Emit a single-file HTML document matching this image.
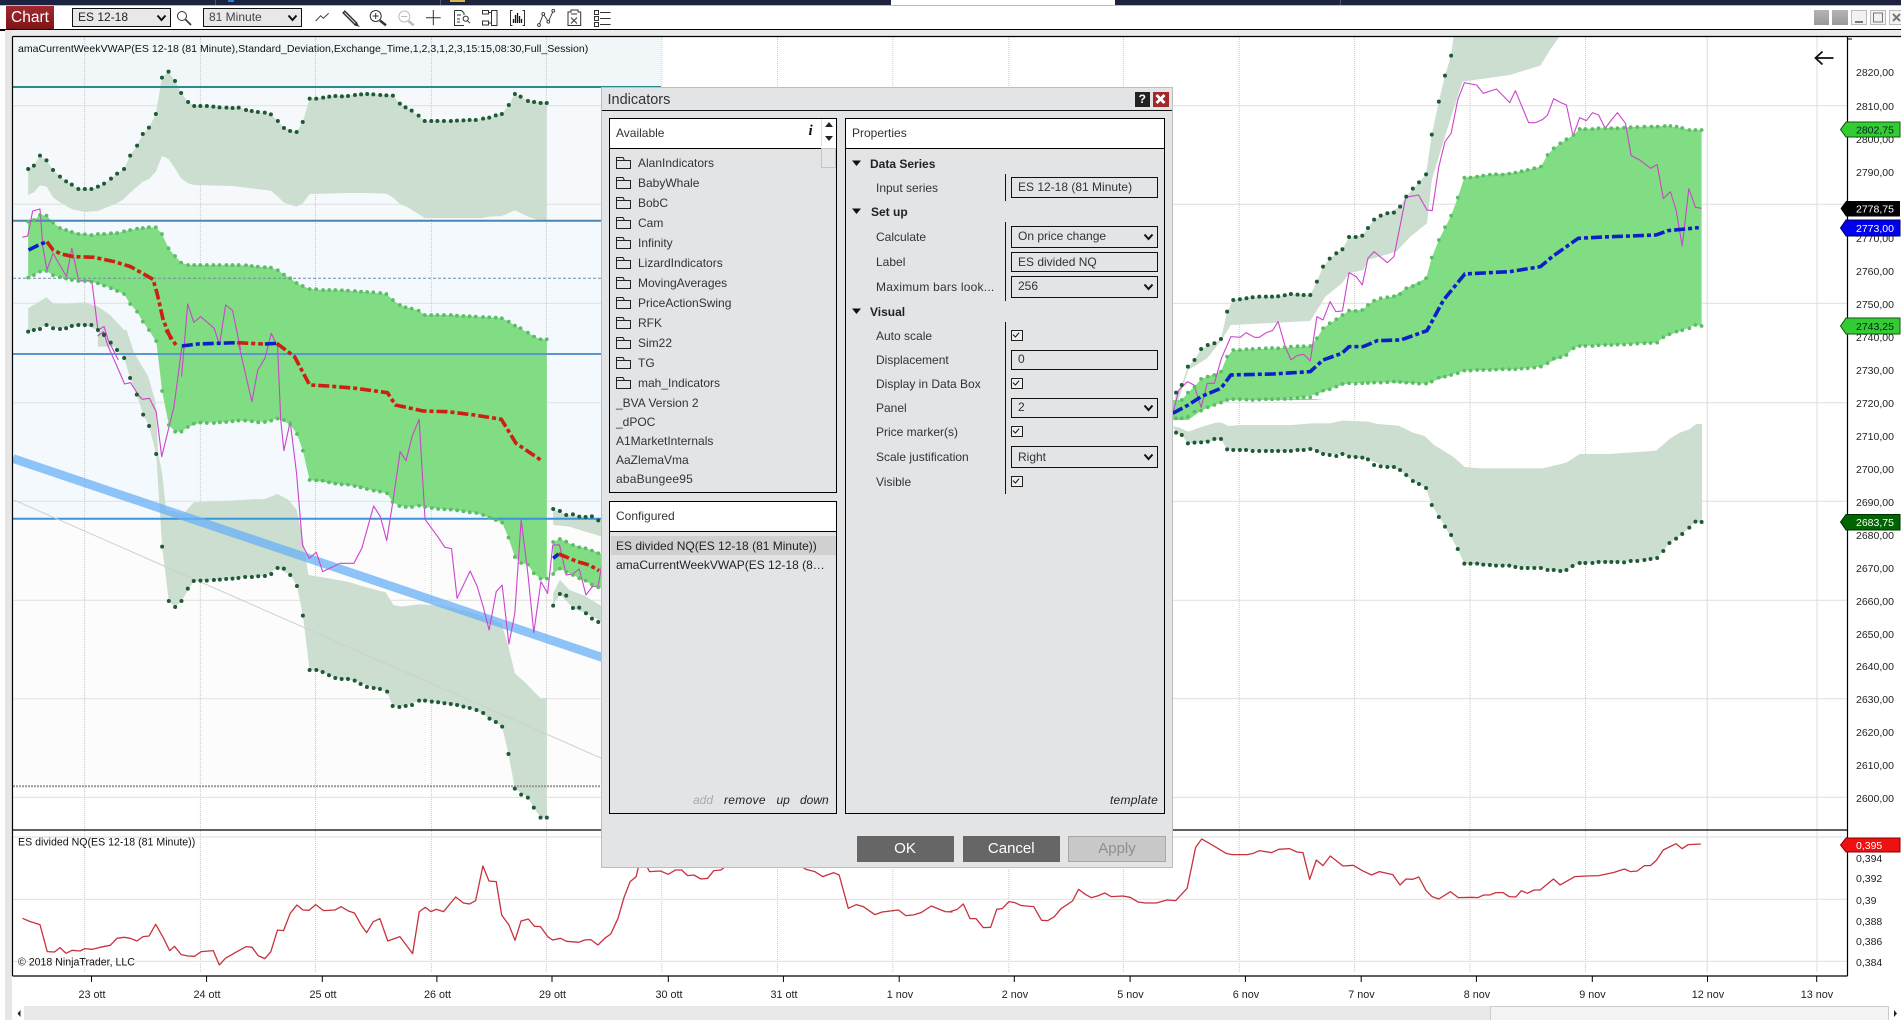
<!DOCTYPE html>
<html><head><meta charset="utf-8"><title>Chart</title>
<style>
html,body{margin:0;padding:0;background:#fff;width:1901px;height:1020px;overflow:hidden}
body{font-family:"Liberation Sans",Arial,sans-serif;position:relative;color:#222}
.a{position:absolute;box-sizing:border-box}
.t{position:absolute;white-space:nowrap;line-height:14px;height:14px;font-size:12px;color:#333;margin-top:-7px}
.b{font-weight:bold;color:#222}
.i{font-style:italic;color:#222}
.box{position:absolute;box-sizing:border-box;left:1011px;width:147px;border:1.5px solid #111;background:#e3e4e6;font-size:12px;color:#333;padding-left:6px}
.box svg{position:absolute;right:3px;top:50%;margin-top:-4px}
.ck{position:absolute;box-sizing:border-box;left:1011px;width:12px;height:11px;border:1.5px solid #222;background:#eee}
.ck:after{content:"";position:absolute;left:2px;top:0;width:3px;height:5px;border:solid #111;border-width:0 1.6px 1.6px 0;transform:rotate(40deg)}
.pan{position:absolute;box-sizing:border-box;border:1.5px solid #000;background:#e3e4e6}
.hd{position:absolute;left:0;right:0;top:0;background:#fff;border-bottom:1.5px solid #000}
.btn{position:absolute;box-sizing:border-box;top:836px;height:26px;text-align:center;font-size:15px;line-height:26px;background:#666;color:#fff}
svg text{font-family:"Liberation Sans",Arial,sans-serif}
.d{fill:none;stroke-linecap:round;vector-effect:non-scaling-stroke}
.l{fill:none;stroke-linejoin:round;vector-effect:non-scaling-stroke}
</style></head><body>

<!-- top bar -->
<div class="a" style="left:0;top:0;width:1901px;height:5px;background:#1b2340"></div>
<div class="a" style="left:891px;top:0;width:224px;height:5px;background:#fff"></div>
<div class="a" style="left:215px;top:0;width:1px;height:5px;background:#556"></div>
<div class="a" style="left:440px;top:0;width:1px;height:5px;background:#556"></div>
<div class="a" style="left:1340px;top:0;width:1px;height:5px;background:#556"></div>
<div class="a" style="left:228px;top:0;width:6px;height:2px;background:#2a7fd0"></div>
<div class="a" style="left:450px;top:0;width:15px;height:2px;background:#d8b840"></div>
<div class="a" style="left:0;top:5px;width:1901px;height:1px;background:#bbb"></div>

<!-- chrome -->
<div class="a" style="left:0;top:29px;width:1901px;height:1.5px;background:#000"></div>
<div class="a" style="left:5px;top:30px;width:1896px;height:7px;background:#ececec"></div>
<div class="a" style="left:5px;top:30px;width:7px;height:990px;background:#e6e6e6"></div>

<!-- toolbar -->
<div class="a" style="left:6px;top:6px;width:48px;height:23px;background:linear-gradient(#a02a30,#7d1518);color:#fff;font-size:15.500px;line-height:23px;text-align:center">Chart</div>
<div class="a" style="left:72px;top:8px;width:99px;height:19px;border:1.5px solid #111;background:#e8e8e8;font-size:12px;line-height:16px;padding-left:5px;color:#222">ES 12-18<svg style="position:absolute;right:3px;top:5px" width="11" height="8"><path d="M1.5 1.5L5.5 6L9.5 1.5" fill="none" stroke="#111" stroke-width="2"/></svg></div>
<div class="a" style="left:203px;top:8px;width:99px;height:19px;border:1.5px solid #111;background:#e8e8e8;font-size:12px;line-height:16px;padding-left:5px;color:#444">81 Minute<svg style="position:absolute;right:3px;top:5px" width="11" height="8"><path d="M1.5 1.5L5.5 6L9.5 1.5" fill="none" stroke="#111" stroke-width="2"/></svg></div>
<svg class="a" style="left:0;top:0" width="700" height="30" fill="none" stroke="#333" stroke-width="1">
 <circle cx="182" cy="16" r="4.500"/><path d="M185.500 19.500L191 25" stroke-width="1.600"/>
 <path d="M315.700 21L320.700 15.700L323.300 18.300L328.700 13.300" stroke="#444"/>
 <path d="M343.500 11.500L356.500 24.500" stroke="#333" stroke-width="3.800"/><path d="M344.500 12.500L356 24" stroke="#ddd" stroke-width="1"/><path d="M356 23L358.500 26L355 25Z" fill="#111"/>
 <circle cx="375.700" cy="16" r="5.500"/><path d="M372.700 16h6M375.700 13v6"/><path d="M380 20.500L386 25.300" stroke-width="2.500"/>
 <g stroke="#bcbcbc"><circle cx="404.300" cy="16.500" r="5.500"/><path d="M401.300 16.500h6"/><path d="M408.500 21L413.700 25.300" stroke-width="2.500"/></g>
 <path d="M426 17.700h14.700M433.300 10v15.300"/>
 <path d="M454.500 10.500h7l2.500 2.500v2M454.500 10.500v15h9.500M457 19h3M457 22h3M457 15h4"/><circle cx="465.700" cy="18.700" r="2.600"/><path d="M467.500 20.700l2.500 2.500"/>
 <path d="M482.500 10.500h6v3.500h-6zM482.500 21h6v4h-6zM488.500 12.500h3M488.500 23h3M491.500 10.500h5.500v15h-5.500z"/>
 <path d="M512.500 10.500h-2v15h2M522.500 10.500h2v15h-2"/><path d="M513.500 23v-4M515.500 23v-8M517.500 23v-10M519.500 23v-7M521.500 23v-4" stroke="#111" stroke-width="1.300"/>
 <path d="M539 25.300L543.300 14L548.300 21.700L553.300 10.700" stroke-width=".9"/><g fill="#fff" stroke-width=".9"><circle cx="539" cy="25" r="1.400"/><circle cx="543.300" cy="14" r="1.400"/><circle cx="548.300" cy="21.700" r="1.400"/><circle cx="553.300" cy="10.700" r="1.400"/></g>
 <path d="M568 12h3v-2h7v2h2.700v13.500h-12.700z"/><path d="M571 17.500l6 6M577 17.500l-6 6M571 14h6"/>
 <path d="M594.500 10.500h4v4h-4zM594.500 16.500h4v4h-4zM594.500 22.500h4v4h-4zM600 12.500h10.500M600 18.500h10.500M600 24.500h10.500"/>
</svg>
<!-- window buttons -->
<div class="a" style="left:1814px;top:10px;width:15px;height:15px;background:linear-gradient(#b5b5b5,#999)"></div>
<div class="a" style="left:1832px;top:10px;width:16px;height:15px;background:linear-gradient(#b5b5b5,#999)"></div>
<svg class="a" style="left:1851px;top:10px" width="50" height="16" fill="none" stroke="#777"><rect x=".5" y=".5" width="15" height="14" fill="#f2f2f2" stroke="#bbb"/><path d="M4 12h8" stroke-width="2"/><rect x="19.500" y=".5" width="15" height="14" fill="#f2f2f2" stroke="#bbb"/><rect x="22.500" y="3" width="9" height="9"/><rect x="38.500" y=".5" width="13" height="14" fill="#f2f2f2" stroke="#bbb"/><path d="M42 4l7 7M49 4l-7 7" stroke-width="2"/></svg>

<!-- CHART -->
<svg class="a" style="left:0;top:0" width="1901" height="1020">
<defs><clipPath id="m"><rect x="13" y="37" width="1834" height="793"/></clipPath></defs>
<g clip-path="url(#m)">
 <!-- zones -->
 <rect x="13" y="37" width="648" height="50" fill="#f1f7f8"/>
 <rect x="13" y="87" width="648" height="133" fill="#f5f9fb"/>
 <rect x="13" y="220" width="648" height="134" fill="#f4f9fe"/>
 <rect x="13" y="354" width="648" height="165" fill="#f4f9fe"/>
 <rect x="13" y="519" width="648" height="267" fill="#fcfcfc"/>
 <!-- grid -->
 <path d="M13 105.700H1847M13 204.300H1847M13 303.300H1847M13 402.700H1847M13 501.300H1847M13 600.300H1847M13 698.700H1847M13 797.300H1847" stroke="#e2e2e2" stroke-width="1.200" fill="none"/>
</g>
<path d="M84.600 37V972M200.400 37V972M315.500 37V972M431.400 37V972M546.400 37V972M661.700 37V972M777.500 37V972M892.800 37V972M1008.800 37V972M1123.400 37V972M1239.300 37V972M1354.600 37V972M1470 37V972M1585.500 37V972" stroke="#c8c8c8" stroke-dasharray="1 1" fill="none"/>
<path d="M1707.200 37V972M1817 37V972" stroke="#dcdcdc" fill="none"/>
<path d="M13 837H1847M13 899.300H1847M13 961.300H1847" stroke="#e2e2e2" stroke-width="1.200" fill="none"/>

<g clip-path="url(#m)">
<!-- bands week 1 -->
<g transform="scale(.408 .3333)">
 <path fill="#cbdecf" d="M69 507L83 497L98 467L114 481L130 510L147 530L162 544L176 554L192 567L224 567L240 560L255 551L272 536L287 521L304 507L319 467L336 437L350 402L365 383L382 342L397 233L413 215L429 243L444 279L461 306L476 318L523 320L555 323L585 323L617 333L664 343L681 363L696 384L727 396L742 366L759 296L792 293L822 288L870 285L900 282L963 287L980 311L1009 332L1041 363L1120 362L1166 360L1199 353L1230 342L1247 315L1262 282L1294 303L1340 309L1340 660L1320 660L1294 650L1262 631L1230 648L1199 650L1180 654L1041 654L1000 622L980 612L963 592L947 581L900 579L850 579L759 582L742 610L727 620L696 608L681 590L664 572L620 566L570 558L476 555L461 550L444 535L429 505L413 477L397 468L382 515L365 537L350 545L336 560L319 578L304 597L287 610L272 617L240 633L208 636L176 628L147 607L130 592L114 560L98 556L83 577L69 585Z"/>
 <path fill="#cbdecf" d="M69 995L69 925L114 892L130 910L160 912L208 907L240 920L270 945L300 985L320 1040L240 1040L240 990L208 975L176 978L147 987L114 975L83 990Z"/>
 <path fill="#80dd83" d="M69 665L83 660L98 645L114 647L130 668L147 684L176 696L208 703L224 705L255 702L287 699L319 690L350 684L382 682L397 702L413 745L429 768L444 788L461 795L603 796L632 800L664 803L681 811L696 824L711 835L727 849L742 858L759 867L792 870L838 871L885 875L947 882L963 900L980 915L994 922L1026 932L1041 945L1105 945L1151 949L1199 952L1230 955L1247 965L1262 977L1294 998L1309 1010L1325 1018L1340 1018L1340 1024L382 1024L365 990L350 965L336 935L319 912L304 882L272 865L240 850L208 843L162 836L130 826L114 813L98 815L83 825L69 833Z"/>
</g>
<g transform="translate(0 330) scale(.3954 .3333)">
 <path fill="#80dd83" d="M395 30L1383 30L1383 746L1367 746L1350 730L1335 704L1318 699L1302 681L1286 623L1270 578L1238 563L1205 549L1156 541L1092 534L1060 527L1042 531L1010 528L993 516L979 490L945 482L897 468L848 461L783 450L766 362L751 312L734 283L702 266L670 276L637 274L603 272L556 277L507 278L475 291L459 305L443 305L427 285L410 183Z"/>
 <path fill="#cbdecf" d="M263 15L270 0L320 0L340 70L375 140L393 215L400 370L410 430L420 540L465 550L490 517L640 508L670 507L702 492L730 510L750 540L765 620L780 735L830 745L885 757L920 770L975 787L995 825L1015 830L1060 823L1120 827L1200 850L1268 880L1285 945L1302 1030L1330 1060L1367 1105L1383 1105L1383 1463L1367 1463L1350 1433L1335 1403L1302 1376L1286 1272L1270 1190L1238 1166L1205 1140L1156 1125L1108 1117L1060 1112L1026 1128L993 1128L979 1085L945 1074L897 1052L864 1047L832 1036L800 1020L783 1020L766 857L751 768L734 735L702 714L670 738L620 741L556 749L490 753L459 813L443 831L427 813L410 650L395 372L377 288L362 254L346 194L329 144L314 84L296 60L280 38Z"/>
 <path fill="#cbdecf" d="M1399 537L1432 555L1481 561L1530 573L1530 622L1480 605L1440 590L1399 585Z"/>
 <path fill="#80dd83" d="M1399 636L1416 627L1449 645L1481 655L1530 675L1530 778L1497 764L1449 735L1416 716L1399 732Z"/>
 <path fill="#cbdecf" d="M1399 827L1399 790L1416 750L1440 780L1480 798L1530 835L1530 880L1482 850L1449 834L1416 792Z"/>
</g>
<!-- bands right -->
<g transform="translate(1160 0) scale(.4726 .3333)">
 <path fill="#cbdecf" d="M27 1240L34 1178L46 1155L59 1100L73 1080L87 1047L115 1030L129 1017L142 935L155 900L196 892L250 889L277 882L318 885L332 845L345 800L359 776L386 748L400 711L428 707L440 684L453 659L481 640L508 620L521 590L548 547L563 523L575 404L590 305L603 227L616 167L622 100L850 100L825 150L805 197L740 225L640 245L605 400L590 470L575 540L565 670L530 710L500 755L440 780L430 810L400 820L385 850L350 890L318 963L150 975L130 1020L100 1075L60 1110L30 1240Z"/>
 <path fill="#80dd83" d="M27 1235L46 1200L59 1178L73 1160L87 1137L129 1115L142 1070L155 1050L250 1045L318 1038L332 1015L345 985L373 958L400 932L428 930L440 915L453 902L495 889L521 865L563 835L575 773L590 720L616 647L630 593L644 533L698 524L752 518L806 500L820 465L833 445L860 418L875 405L888 387L1068 378L1105 384L1120 390L1146 390L1146 978L1133 975L1105 991L1065 1012L1052 1028L968 1034L888 1038L875 1045L860 1065L820 1090L806 1100L752 1108L644 1112L616 1125L575 1145L563 1151L481 1147L400 1150L373 1160L332 1182L304 1192L224 1198L155 1198L129 1208L87 1232L60 1260L27 1260Z"/>
</g>
<g transform="translate(1160 400) scale(.4726 .3333)">
 <path fill="#80dd83" d="M27 0L350 0L300 -5L155 -2L129 0L87 25L60 55L27 55Z"/>
 <path fill="#cbdecf" d="M27 78L40 82L60 95L85 82L118 68L130 68L145 78L170 75L280 75L320 70L360 70L385 62L440 65L460 72L505 77L535 98L560 108L580 135L620 170L645 201L680 205L810 205L860 188L888 162L950 162L1050 152L1080 115L1100 98L1120 88L1135 72L1147 72L1147 366L1133 365L1105 402L1078 429L1052 474L996 483L888 489L860 510L847 513L806 504L725 497L644 491L630 447L603 380L575 315L563 264L535 243L508 210L481 201L440 178L400 170L386 162L345 162L318 147L264 153L182 150L142 148L129 117L101 125L59 130L46 105L34 98Z"/>
</g>

<!-- lines -->
<path d="M13 87H661" stroke="#2b8c90" stroke-width="2" fill="none"/>
<path d="M13 220.700H661" stroke="#4a86b4" stroke-width="2" fill="none"/>
<path d="M13 278.300H661" stroke="#6f8ea3" stroke-dasharray="3 2" fill="none"/>
<path d="M13 354H661" stroke="#5b96cc" stroke-width="2" fill="none"/>
<path d="M13 518.700H661" stroke="#3a94dc" stroke-width="2" fill="none"/>
<path d="M13 786.300H661" stroke="#999" stroke-width="2" stroke-dasharray="2 1" fill="none"/>
<path d="M14 500L660 784" stroke="#cfcfcf" fill="none"/>
<path d="M13 458.500L660 677" stroke="#6ab0f5" stroke-opacity=".75" stroke-width="8.800" fill="none"/>

<!-- pink price-like line -->
<g stroke="#cc44cc" stroke-width="1.100">
 <g transform="scale(.408 .3333)">
  <path class="l" d="M55 712L68 708L80 633L98 627L105 740L115 810L130 760L163 830L176 745L193 843L225 843L240 990L255 980L265 1020L290 1080"/>
  <path class="l" d="M445 1130L460 912L475 967L492 950L525 985L538 1035L553 915L570 932L590 1050"/>
 </g>
 <g transform="translate(0 330) scale(.3954 .3333)">
  <path class="l" d="M247 18L262 5L272 45L285 80L300 120L315 162L330 158L350 195L360 208L378 205L395 245L409 380L440 230L460 50"/>
  <path class="l" d="M603 40L637 215L652 120L670 85L686 10L702 50L710 270L718 362L734 275L750 430L765 645L782 685L800 667L816 725L860 700L895 700L915 655L945 528L962 560L978 632L993 520L1012 365L1027 392L1042 320L1060 268L1075 568L1110 625L1125 652L1142 656L1156 805L1189 723L1207 770L1222 830L1237 900L1255 785L1270 765L1287 942L1302 850L1318 570L1335 730L1350 908L1368 755L1385 790L1398 645L1415 645L1432 735L1449 732L1465 717L1482 795L1498 770L1513 768L1525 680"/>
 </g>
 <g transform="translate(1160 0) scale(.4726 .3333)">
  <path class="l" d="M27 1240L40 1170L58 1145L72 1155L87 1222L100 1150L115 1150L130 1075L150 1010L170 1012L182 998L200 1012L210 1012L225 998L238 992L250 965L265 1040L277 1080L291 1066L304 1063L318 1083L332 950L345 960L360 905L372 935L386 933L400 818L415 830L428 855L440 775L453 755L481 788L495 770L520 592L547 585L565 630L576 632L590 500L603 425L616 400L630 300L644 248L670 255L684 280L712 267L740 308L752 272L780 368L795 368L810 358L820 345L833 296L848 308L860 315L874 408L888 353L902 362L915 338L928 345L942 385L955 360L968 338L985 370L997 467L1015 480L1038 505L1052 494L1065 596L1080 575L1092 630L1105 738L1119 566L1133 622L1146 625"/>
 </g>
</g>

<!-- mean dash-dot -->
<g stroke-width="3.600" stroke-dasharray="11 3 4 3">
 <g transform="scale(.408 .3333)">
  <path class="l" stroke="#0d1fc8" d="M70 750L95 735L115 725"/>
  <path class="l" stroke="#cc2012" d="M115 725L130 750L150 762L180 770L230 772L280 785L320 800L375 838L385 880L400 960L420 1020"/>
 </g>
 <g transform="translate(0 330) scale(.3954 .3333)">
  <path class="l" stroke="#cc2012" d="M420 0L445 45"/>
  <path class="l" stroke="#0d1fc8" d="M460 48L500 42L600 38"/>
  <path class="l" stroke="#cc2012" d="M600 38L665 42"/>
  <path class="l" stroke="#0d1fc8" d="M670 42L700 40"/>
  <path class="l" stroke="#cc2012" d="M700 40L745 80L783 165L830 168L900 175L980 188L1000 225L1070 243L1130 245L1200 255L1268 268L1305 340L1370 392"/>
  <path class="l" stroke="#0d1fc8" d="M1399 685L1413 672"/>
  <path class="l" stroke="#cc2012" d="M1413 672L1430 680L1460 695L1490 705L1515 722"/>
 </g>
 <g transform="translate(1160 0) scale(.4726 .3333)">
  <path class="l" stroke="#0d1fc8" d="M27 1240L60 1215L87 1190L129 1165L150 1125L240 1122L318 1115L345 1080L385 1060L400 1040L430 1040L460 1022L510 1020L565 992L600 900L645 822L740 815L805 800L830 770L885 715L940 711L1050 705L1075 692L1140 683"/>
 </g>
</g>

<!-- dots -->
<g transform="scale(.408 .3333)">
 <path class="d" stroke="#1f5a36" stroke-width="4" d="M69 507h0M83 497h0M98 467h0M114 481h0M130 510h0M147 530h0M162 544h0M176 554h0M192 567h0M208 567h0M224 567h0M240 560h0M255 551h0M272 536h0M287 521h0M304 507h0M319 467h0M336 437h0M350 402h0M365 383h0M382 342h0M397 233h0M413 215h0M429 243h0M444 279h0M461 306h0M476 318h0M491 318h0M507 318h0M523 320h0M538 322h0M555 323h0M570 324h0M585 323h0M603 330h0M617 333h0M632 336h0M649 338h0M664 343h0M681 363h0M696 384h0M711 393h0M727 396h0M742 366h0M759 296h0M775 296h0M792 293h0M807 290h0M822 288h0M838 289h0M853 288h0M870 285h0M885 283h0M900 282h0M915 283h0M932 285h0M947 286h0M963 287h0M980 311h0M994 322h0M1009 332h0M1026 347h0M1041 363h0M1057 363h0M1072 363h0M1088 363h0M1105 363h0M1120 362h0M1136 361h0M1151 360h0M1166 360h0M1184 356h0M1199 353h0M1215 346h0M1230 342h0M1247 315h0M1262 282h0M1276 290h0M1294 303h0M1309 306h0M1325 309h0M1340 309h0M69 995h0M83 990h0M98 987h0M114 975h0M130 985h0M147 987h0M162 985h0M176 978h0M192 975h0M208 975h0M224 975h0M240 990h0M255 1004h0"/>
 <path class="d" stroke="#5cbc68" stroke-width="3.800" d="M69 665h0M83 660h0M98 645h0M114 647h0M130 668h0M147 684h0M162 690h0M176 696h0M192 702h0M208 703h0M224 705h0M240 702h0M255 702h0M272 700h0M287 699h0M304 694h0M319 690h0M336 686h0M350 684h0M365 682h0M382 682h0M397 702h0M413 745h0M429 768h0M444 788h0M461 795h0M476 795h0M491 795h0M507 795h0M523 795h0M538 795h0M555 795h0M570 795h0M585 795h0M603 796h0M617 798h0M632 800h0M649 802h0M664 803h0M681 811h0M696 824h0M711 835h0M727 849h0M742 858h0M759 867h0M775 868h0M792 870h0M807 870h0M822 870h0M838 871h0M853 872h0M870 873h0M885 875h0M900 876h0M915 877h0M932 879h0M947 882h0M963 900h0M980 915h0M994 922h0M1009 926h0M1026 932h0M1041 945h0M1057 945h0M1072 945h0M1088 945h0M1105 945h0M1120 947h0M1136 948h0M1151 949h0M1166 950h0M1184 951h0M1199 952h0M1215 953h0M1230 955h0M1247 965h0M1262 977h0M1276 985h0M1294 998h0M1309 1010h0M1325 1018h0M1340 1018h0M69 833h0M83 825h0M98 815h0M114 813h0M130 826h0M147 832h0M162 836h0M176 840h0M192 843h0M208 843h0M224 845h0M240 850h0M255 857h0M272 865h0M287 873h0M304 882h0M319 912h0M336 935h0M350 965h0M365 990h0"/>
</g>
<g transform="translate(0 330) scale(.3954 .3333)">
 <path class="d" stroke="#5cbc68" stroke-width="3.800" d="M395 33h0M410 183h0M427 285h0M443 305h0M459 305h0M475 291h0M490 281h0M507 278h0M523 279h0M541 279h0M556 277h0M572 276h0M588 274h0M603 272h0M620 272h0M637 274h0M653 277h0M670 276h0M686 272h0M702 266h0M718 270h0M734 283h0M751 312h0M766 362h0M783 450h0M800 451h0M816 452h0M832 457h0M848 461h0M864 463h0M880 464h0M897 468h0M912 472h0M928 477h0M945 482h0M961 485h0M979 490h0M993 516h0M1010 528h0M1026 531h0M1042 531h0M1060 527h0M1075 531h0M1092 534h0M1108 537h0M1124 538h0M1140 539h0M1156 541h0M1172 544h0M1188 547h0M1205 549h0M1222 555h0M1238 563h0M1254 570h0M1270 578h0M1286 623h0M1302 681h0M1318 699h0M1335 704h0M1350 730h0M1367 746h0M1383 746h0M1399 636h0M1416 627h0M1432 635h0M1449 645h0M1465 652h0M1481 655h0M1497 662h0M1513 670h0M1399 732h0M1416 716h0M1432 726h0M1449 735h0M1465 745h0M1481 752h0M1497 764h0M1513 772h0"/>
 <path class="d" stroke="#1f5a36" stroke-width="4" d="M263 15h0M280 38h0M296 60h0M314 84h0M329 144h0M346 194h0M362 254h0M377 288h0M395 372h0M410 650h0M427 813h0M443 831h0M459 813h0M475 776h0M490 753h0M507 752h0M523 752h0M541 750h0M556 749h0M572 747h0M588 746h0M603 744h0M620 741h0M637 741h0M653 739h0M670 738h0M686 732h0M702 714h0M718 716h0M734 735h0M751 768h0M766 857h0M783 1020h0M800 1020h0M816 1026h0M832 1036h0M848 1044h0M864 1047h0M880 1047h0M897 1052h0M912 1062h0M928 1071h0M945 1074h0M961 1077h0M979 1085h0M993 1128h0M1010 1131h0M1026 1128h0M1042 1125h0M1060 1112h0M1075 1112h0M1092 1115h0M1108 1117h0M1124 1120h0M1140 1122h0M1156 1125h0M1172 1130h0M1188 1134h0M1205 1140h0M1222 1149h0M1238 1166h0M1254 1176h0M1270 1190h0M1286 1272h0M1302 1376h0M1318 1394h0M1335 1403h0M1350 1433h0M1367 1463h0M1383 1463h0M1399 537h0M1416 543h0M1432 555h0M1449 553h0M1465 560h0M1481 561h0M1497 559h0M1513 571h0M1399 827h0M1416 792h0M1432 797h0M1449 834h0M1465 833h0M1482 850h0M1497 866h0M1513 876h0"/>
</g>
<g transform="translate(1160 0) scale(.4726 .3333)">
 <path class="d" stroke="#1f5a36" stroke-width="4" d="M34 1178h0M46 1155h0M59 1100h0M73 1080h0M87 1047h0M101 1035h0M115 1030h0M129 1017h0M142 935h0M155 900h0M169 898h0M183 895h0M196 892h0M210 890h0M224 890h0M237 890h0M250 889h0M264 886h0M277 882h0M291 884h0M304 885h0M318 885h0M332 845h0M345 800h0M359 776h0M373 760h0M386 748h0M400 711h0M414 711h0M428 707h0M440 684h0M453 659h0M467 647h0M481 640h0M495 638h0M508 620h0M521 590h0M535 566h0M548 547h0M563 523h0M575 404h0M590 305h0M603 227h0M616 167h0"/>
 <path class="d" stroke="#5cbc68" stroke-width="3.800" d="M46 1200h0M59 1178h0M73 1160h0M87 1137h0M101 1130h0M115 1125h0M129 1115h0M142 1070h0M155 1050h0M169 1050h0M183 1048h0M196 1047h0M210 1046h0M224 1045h0M237 1044h0M250 1045h0M264 1042h0M277 1040h0M291 1039h0M304 1039h0M318 1038h0M332 1015h0M345 985h0M359 970h0M373 958h0M386 945h0M400 932h0M414 933h0M428 930h0M440 915h0M453 902h0M467 895h0M481 892h0M495 889h0M508 882h0M521 865h0M535 858h0M548 850h0M563 835h0M575 773h0M590 720h0M603 682h0M616 647h0M630 593h0M644 533h0M657 533h0M671 530h0M684 527h0M698 524h0M711 523h0M725 524h0M739 521h0M752 518h0M765 514h0M778 510h0M792 505h0M806 500h0M820 465h0M833 445h0M847 430h0M860 418h0M875 405h0M888 387h0M900 387h0M915 387h0M928 385h0M942 385h0M955 385h0M968 385h0M982 383h0M996 382h0M1010 381h0M1025 380h0M1040 380h0M1053 380h0M1068 378h0M1080 378h0M1093 380h0M1105 384h0M1120 390h0M1133 390h0M1146 390h0M87 1232h0M101 1222h0M115 1215h0M129 1208h0M142 1200h0M155 1198h0M169 1198h0M183 1199h0M196 1200h0M210 1199h0M224 1198h0M237 1198h0M250 1197h0M264 1197h0M277 1196h0M291 1194h0M304 1192h0M318 1192h0M332 1182h0M345 1172h0M359 1168h0M373 1160h0M386 1152h0M400 1150h0M414 1151h0M428 1150h0M440 1149h0M453 1148h0M467 1148h0M481 1147h0M495 1145h0M508 1146h0M521 1148h0M535 1149h0M548 1151h0M563 1151h0M575 1145h0M590 1133h0M603 1130h0M616 1125h0M630 1120h0M644 1112h0M657 1112h0M671 1110h0M684 1110h0M698 1110h0M711 1109h0M725 1108h0M739 1108h0M752 1108h0M765 1106h0M778 1105h0M792 1103h0M806 1100h0M820 1090h0M833 1076h0M847 1072h0M860 1065h0M875 1045h0M888 1038h0M900 1038h0M915 1038h0M928 1036h0M942 1035h0M955 1035h0M968 1034h0M982 1034h0M996 1033h0M1010 1031h0M1025 1030h0M1038 1029h0M1052 1028h0M1065 1012h0M1078 1003h0M1093 995h0M1105 991h0M1120 985h0M1133 975h0M1146 978h0"/>
</g>
<g transform="translate(1160 400) scale(.4726 .3333)">
 <path class="d" stroke="#5cbc68" stroke-width="3.800" d="M34 55h0M46 55h0M59 50h0M73 35h0"/>
 <path class="d" stroke="#1f5a36" stroke-width="4" d="M34 98h0M46 105h0M59 130h0M73 128h0M87 127h0M101 125h0M115 117h0M129 117h0M142 148h0M155 150h0M169 150h0M182 150h0M196 153h0M210 153h0M224 153h0M237 153h0M250 153h0M264 153h0M277 153h0M291 150h0M304 150h0M318 147h0M332 153h0M345 162h0M359 165h0M373 168h0M386 162h0M400 170h0M414 171h0M428 173h0M440 178h0M453 195h0M467 199h0M481 201h0M495 201h0M508 210h0M521 225h0M535 243h0M548 252h0M563 264h0M575 315h0M590 351h0M603 380h0M616 405h0M630 447h0M644 491h0M657 491h0M671 491h0M684 494h0M698 495h0M711 497h0M725 497h0M739 497h0M752 501h0M765 504h0M778 504h0M792 504h0M806 504h0M820 510h0M833 510h0M847 513h0M860 510h0M873 498h0M888 489h0M900 489h0M915 489h0M928 486h0M942 486h0M955 486h0M968 486h0M982 487h0M996 483h0M1010 483h0M1025 480h0M1038 477h0M1052 474h0M1065 453h0M1078 429h0M1092 416h0M1105 402h0M1120 383h0M1133 365h0M1146 366h0"/>
</g>
</g>

<!-- lower panel line -->
<g stroke="#c8323c" stroke-width="1.300">
 <g transform="translate(0 810) scale(.6059 .3333)">
  <path class="l" d="M37 325L50 335L66 344L78 425L90 426L99 413L109 430L119 421L132 423L140 416L152 418L165 412L182 406L193 385L205 382L215 385L226 393L236 380L246 378L257 343L270 385L280 422L288 409L299 434L310 438L321 439L332 425L352 422L362 465L372 445L388 428L406 410L416 412L426 437L437 446L447 425L458 360L468 362L479 310L490 285L500 300L510 301L521 284L534 302L553 300L563 290L575 303L585 309L596 345L605 368L616 335L627 326L640 393L660 380L681 431L692 305L702 292L711 305L720 298L732 305L752 261L765 279L775 282L785 272L797 168L807 213L819 215L828 315L840 345L850 391L860 333L872 327L882 349L892 350L904 380L912 390L925 385L935 394L955 397L965 390L975 389L987 405L998 385L1008 372L1020 325L1030 262L1040 215L1050 200L1058 135L1072 185L1090 183L1103 193L1115 180L1125 180L1135 197L1145 195L1157 207L1168 205L1178 182L1190 180L1210 150L1310 150L1330 178L1345 185L1358 200L1376 188L1385 195L1400 295L1413 284L1425 290L1444 314L1456 306L1483 300L1495 317L1507 315L1520 308L1537 288L1560 305L1572 306"/>
 </g>
 <g transform="translate(950 810) scale(.6065 .3333)">
  <path class="l" d="M0 305L12 298L22 282L33 326L43 326L55 353L67 352L77 298L86 296L97 275L107 278L118 287L138 290L151 331L161 332L172 320L183 296L202 273L212 238L223 253L233 263L243 258L255 249L266 260L285 258L297 262L310 276L322 279L340 279L358 270L372 272L391 235L405 112L415 87L435 108L455 130L465 134L490 134L500 130L510 122L530 128L542 118L560 116L572 126L582 128L593 208L604 150L615 167L627 138L648 168L665 166L680 182L695 195L708 185L730 194L742 225L752 207L763 208L773 201L785 242L795 260L806 267L825 245L838 263L860 262L870 263L880 255L890 255L900 248L912 248L922 260L933 261L942 242L952 250L963 240L973 240L995 207L1006 225L1030 200L1050 198L1070 197L1095 187L1112 177L1122 185L1133 183L1145 167L1155 167L1165 150L1176 120L1197 101L1207 116L1217 104L1238 102"/>
 </g>
</g>

<!-- axes -->
<path d="M12.500 36.500H1901" stroke="#000" stroke-width="1.200" fill="none"/>
<path d="M12.500 36.500V976" stroke="#000" stroke-width="1.200" fill="none"/>
<path d="M12.500 830H1847.500" stroke="#000" stroke-width="1.300" fill="none"/>
<path d="M12.500 976H1847.500" stroke="#000" stroke-width="1.300" fill="none"/>
<path d="M1847.500 37V976" stroke="#000" stroke-width="1.200" fill="none"/>
<path d="M1848 39h4" stroke="#000" fill="none"/>
<path d="M91.500 976v6M206.600 976v6M322.300 976v6M436.900 976v6M552 976v6M668.300 976v6M783.400 976v6M899.200 976v6M1014.300 976v6M1130.100 976v6M1245.400 976v6M1361.200 976v6M1476.400 976v6M1592.300 976v6M1707.500 976v6M1816.700 976v6" stroke="#000" fill="none"/>
<!-- back arrow -->
<path d="M1833.500 58H1815.500M1822.500 51.500L1815.500 58L1822.500 64.500" fill="none" stroke="#111" stroke-width="1.800"/>

<g font-size="10.500" fill="#222">
 <text x="1856" y="76">2820,00</text><text x="1856" y="110">2810,00</text><text x="1856" y="143">2800,00</text><text x="1856" y="176">2790,00</text><text x="1856" y="242">2770,00</text><text x="1856" y="275">2760,00</text><text x="1856" y="308">2750,00</text><text x="1856" y="341">2740,00</text><text x="1856" y="374">2730,00</text><text x="1856" y="407">2720,00</text><text x="1856" y="440">2710,00</text><text x="1856" y="473">2700,00</text><text x="1856" y="506">2690,00</text><text x="1856" y="539">2680,00</text><text x="1856" y="572">2670,00</text><text x="1856" y="605">2660,00</text><text x="1856" y="638">2650,00</text><text x="1856" y="670">2640,00</text><text x="1856" y="703">2630,00</text><text x="1856" y="736">2620,00</text><text x="1856" y="769">2610,00</text><text x="1856" y="802">2600,00</text>
 <text x="1856" y="862">0,394</text><text x="1856" y="882">0,392</text><text x="1856" y="904">0,39</text><text x="1856" y="925">0,388</text><text x="1856" y="945">0,386</text><text x="1856" y="966">0,384</text>
</g>
<g font-size="10.500">
 <path d="M1840.500 129.500L1846 122H1900V137H1846Z" fill="#33cc33" stroke="#115511"/><text x="1856" y="133.500" fill="#022">2802,75</text>
 <path d="M1840.500 208.500L1846 201H1900V216.500H1846Z" fill="#000"/><text x="1856" y="212.500" fill="#fff">2778,75</text>
 <path d="M1840.500 228L1846 220H1900V236H1846Z" fill="#0000ee" stroke="#000060"/><text x="1856" y="232" fill="#fff">2773,00</text>
 <path d="M1840.500 326L1846 318H1900V334H1846Z" fill="#33cc33" stroke="#115511"/><text x="1856" y="330" fill="#022">2743,25</text>
 <path d="M1840.500 522L1846 514.500H1900V530H1846Z" fill="#006400" stroke="#003000"/><text x="1856" y="526" fill="#fff">2683,75</text>
 <path d="M1840.500 845L1846 838H1900V852H1846Z" fill="#ee1111" stroke="#800"/><text x="1856" y="849" fill="#fff">0,395</text>
</g>
<g font-size="10.800" fill="#222" text-anchor="middle">
 <text x="92" y="998">23 ott</text><text x="207" y="998">24 ott</text><text x="323" y="998">25 ott</text><text x="437.500" y="998">26 ott</text><text x="552.500" y="998">29 ott</text><text x="669" y="998">30 ott</text><text x="784" y="998">31 ott</text><text x="900" y="998">1 nov</text><text x="1015" y="998">2 nov</text><text x="1130.500" y="998">5 nov</text><text x="1246" y="998">6 nov</text><text x="1361.500" y="998">7 nov</text><text x="1477" y="998">8 nov</text><text x="1592.500" y="998">9 nov</text><text x="1708" y="998">12 nov</text><text x="1817" y="998">13 nov</text>
</g>
<text x="18" y="52" font-size="10.570" fill="#111">amaCurrentWeekVWAP(ES 12-18 (81 Minute),Standard_Deviation,Exchange_Time,1,2,3,1,2,3,15:15,08:30,Full_Session)</text>
<text x="18" y="845.500" font-size="10.600" fill="#111">ES divided NQ(ES 12-18 (81 Minute))</text>
<text x="18" y="965.500" font-size="10.600" fill="#111">© 2018 NinjaTrader, LLC</text>
<!-- scrollbar -->
<rect x="12" y="1006" width="1889" height="14" fill="#e8e8e8"/>
<rect x="12" y="1006" width="12" height="14" fill="#fff"/>
<rect x="1889" y="1006" width="12" height="14" fill="#fff"/>
<rect x="1490.500" y="1006.500" width="398" height="14" fill="#f3f3f3" stroke="#ccc"/>
<path d="M20.500 1010v7l-3-3.500zM1894 1010v7l3-3.500z" fill="#222"/>
</svg>

<!-- DIALOG -->
<div class="a" style="left:601px;top:87px;width:572px;height:781px;background:#e3e4e6;border:1px solid #bdbdbd"></div>
<div class="a" style="left:602px;top:110px;width:570px;height:1.300px;background:#111"></div>
<div class="t" style="left:607.500px;top:99.500px;font-size:14.500px;line-height:16px;height:16px;margin-top:-8px;color:#333">Indicators</div>
<div class="a" style="left:1134.500px;top:92px;width:15.500px;height:14.500px;background:#222;color:#fff;font-size:12px;font-weight:bold;line-height:14.500px;text-align:center">?</div>
<div class="a" style="left:1153px;top:92px;width:15.500px;height:14.500px;background:#a02a2a"><svg width="15" height="14" style="display:block"><path d="M3.500 3L11.500 11M11.500 3L3.500 11" stroke="#fff" stroke-width="2.800"/></svg></div>

<!-- Available -->
<div class="pan" style="left:609px;top:118px;width:228px;height:375px"><div class="hd" style="height:28.500px"></div></div>
<div class="t" style="left:616px;top:132.700px">Available</div>
<div class="t" style="left:808.500px;top:130px;font:italic bold 15px 'Liberation Serif',serif;color:#111">i</div>
<div class="a" style="left:821px;top:119px;width:1px;height:27px;background:#ddd"></div>
<svg class="a" style="left:823px;top:121px" width="12" height="22"><path d="M2 6L6 1L10 6ZM2 15H10L6 20Z" fill="#222"/></svg>
<div class="a" style="left:821px;top:148px;width:15px;height:20px;background:#e6e6e6;border:1px solid #c4c4c4"></div>
<svg class="a" style="left:614px;top:150px" width="20" height="245" fill="none" stroke="#222">
 <path d="M2.500 18.500V7.500H9L10.500 10.500H16.500V18.500ZM2.500 10.500H10.500"/>
 <path transform="translate(0 20)" d="M2.500 18.500V7.500H9L10.500 10.500H16.500V18.500ZM2.500 10.500H10.500"/>
 <path transform="translate(0 40)" d="M2.500 18.500V7.500H9L10.500 10.500H16.500V18.500ZM2.500 10.500H10.500"/>
 <path transform="translate(0 60)" d="M2.500 18.500V7.500H9L10.500 10.500H16.500V18.500ZM2.500 10.500H10.500"/>
 <path transform="translate(0 80)" d="M2.500 18.500V7.500H9L10.500 10.500H16.500V18.500ZM2.500 10.500H10.500"/>
 <path transform="translate(0 100)" d="M2.500 18.500V7.500H9L10.500 10.500H16.500V18.500ZM2.500 10.500H10.500"/>
 <path transform="translate(0 120)" d="M2.500 18.500V7.500H9L10.500 10.500H16.500V18.500ZM2.500 10.500H10.500"/>
 <path transform="translate(0 140)" d="M2.500 18.500V7.500H9L10.500 10.500H16.500V18.500ZM2.500 10.500H10.500"/>
 <path transform="translate(0 160)" d="M2.500 18.500V7.500H9L10.500 10.500H16.500V18.500ZM2.500 10.500H10.500"/>
 <path transform="translate(0 180)" d="M2.500 18.500V7.500H9L10.500 10.500H16.500V18.500ZM2.500 10.500H10.500"/>
 <path transform="translate(0 200)" d="M2.500 18.500V7.500H9L10.500 10.500H16.500V18.500ZM2.500 10.500H10.500"/>
 <path transform="translate(0 220)" d="M2.500 18.500V7.500H9L10.500 10.500H16.500V18.500ZM2.500 10.500H10.500"/>
</svg>
<div class="t" style="left:638px;top:162.700px">AlanIndicators</div>
<div class="t" style="left:638px;top:182.700px">BabyWhale</div>
<div class="t" style="left:638px;top:202.700px">BobC</div>
<div class="t" style="left:638px;top:222.700px">Cam</div>
<div class="t" style="left:638px;top:242.700px">Infinity</div>
<div class="t" style="left:638px;top:262.700px">LizardIndicators</div>
<div class="t" style="left:638px;top:282.700px">MovingAverages</div>
<div class="t" style="left:638px;top:302.700px">PriceActionSwing</div>
<div class="t" style="left:638px;top:322.700px">RFK</div>
<div class="t" style="left:638px;top:342.700px">Sim22</div>
<div class="t" style="left:638px;top:362.700px">TG</div>
<div class="t" style="left:638px;top:382.700px">mah_Indicators</div>
<div class="t" style="left:616px;top:402.700px">_BVA Version 2</div>
<div class="t" style="left:616px;top:421.700px">_dPOC</div>
<div class="t" style="left:616px;top:440.700px">A1MarketInternals</div>
<div class="t" style="left:616px;top:459.700px">AaZlemaVma</div>
<div class="t" style="left:616px;top:478.700px;letter-spacing:.2px">abaBungee95</div>

<!-- Configured -->
<div class="pan" style="left:609px;top:501px;width:228px;height:312.500px"><div class="hd" style="height:28.500px"></div></div>
<div class="t" style="left:616px;top:515.700px">Configured</div>
<div class="a" style="left:610.500px;top:536px;width:225px;height:19px;background:#d0d0d0"></div>
<div class="t" style="left:616px;top:545.700px;color:#222">ES divided NQ(ES 12-18 (81 Minute))</div>
<div class="t" style="left:616px;top:564.700px;color:#222">amaCurrentWeekVWAP(ES 12-18 (8…</div>
<div class="t i" style="left:693px;top:800px;color:#aaa">add</div>
<div class="t i" style="left:724px;top:800px;letter-spacing:.3px">remove</div>
<div class="t i" style="left:776.500px;top:800px">up</div>
<div class="t i" style="left:800px;top:800px">down</div>

<!-- Properties -->
<div class="pan" style="left:845px;top:118px;width:320px;height:695.500px"><div class="hd" style="height:28.500px"></div></div>
<div class="t" style="left:852px;top:132.700px">Properties</div>
<svg class="a" style="left:851px;top:155px" width="12" height="165" fill="#111"><path d="M1 5.500H10L5.500 11ZM1 53.500H10L5.500 59ZM1 153.500H10L5.500 159Z"/></svg>
<div class="t b" style="left:870px;top:164px">Data Series</div>
<div class="t b" style="left:871px;top:211.700px">Set up</div>
<div class="t b" style="left:870px;top:311.700px">Visual</div>
<div class="a" style="left:1005px;top:174px;width:1px;height:27px;background:#111"></div>
<div class="a" style="left:1005px;top:222px;width:1px;height:79px;background:#111"></div>
<div class="a" style="left:1005px;top:322px;width:1px;height:172px;background:#111"></div>
<div class="t" style="left:876px;top:188px">Input series</div>
<div class="t" style="left:876px;top:236.700px">Calculate</div>
<div class="t" style="left:876px;top:261.700px">Label</div>
<div class="t" style="left:876px;top:286.700px;letter-spacing:.22px">Maximum bars look...</div>
<div class="t" style="left:876px;top:335.700px">Auto scale</div>
<div class="t" style="left:876px;top:359.700px">Displacement</div>
<div class="t" style="left:876px;top:383.700px">Display in Data Box</div>
<div class="t" style="left:876px;top:407.700px">Panel</div>
<div class="t" style="left:876px;top:431.700px">Price marker(s)</div>
<div class="t" style="left:876px;top:456.700px">Scale justification</div>
<div class="t" style="left:876px;top:481.700px">Visible</div>

<div class="box" style="top:177px;height:21px;line-height:19px">ES 12-18 (81 Minute)</div>
<div class="box" style="top:225.500px;height:22.500px;line-height:19.500px">On price change<svg width="11" height="8"><path d="M1.500 1.500L5.500 6L9.500 1.500" fill="none" stroke="#111" stroke-width="2"/></svg></div>
<div class="box" style="top:251.500px;height:20.500px;line-height:18px">ES divided NQ</div>
<div class="box" style="top:275.500px;height:22.500px;line-height:19.500px">256<svg width="11" height="8"><path d="M1.500 1.500L5.500 6L9.500 1.500" fill="none" stroke="#111" stroke-width="2"/></svg></div>
<div class="ck" style="top:330px"></div>
<div class="box" style="top:349.500px;height:20px;line-height:17px">0</div>
<div class="ck" style="top:378px"></div>
<div class="box" style="top:397.500px;height:20.500px;line-height:17.500px">2<svg width="11" height="8"><path d="M1.500 1.500L5.500 6L9.500 1.500" fill="none" stroke="#111" stroke-width="2"/></svg></div>
<div class="ck" style="top:426px"></div>
<div class="box" style="top:445.500px;height:22.500px;line-height:20px">Right<svg width="11" height="8"><path d="M1.500 1.500L5.500 6L9.500 1.500" fill="none" stroke="#111" stroke-width="2"/></svg></div>
<div class="ck" style="top:476px"></div>
<div class="t i" style="right:743px;top:800px;letter-spacing:.25px">template</div>

<div class="btn" style="left:856.500px;width:97px">OK</div>
<div class="btn" style="left:962.500px;width:97.500px">Cancel</div>
<div class="btn" style="left:1068px;width:98px;background:#c8c8c8;border:1px solid #a8a8a8;color:#8f8f8f;line-height:24px">Apply</div>

</body></html>
